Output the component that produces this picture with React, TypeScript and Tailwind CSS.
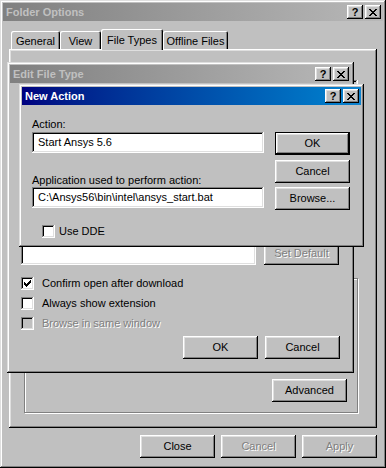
import React from 'react';

const raised = 'shadow-[inset_-1px_-1px_#000,inset_1px_1px_#fff,inset_-2px_-2px_#808080,inset_2px_2px_#dfdfdf]';
const frame = 'shadow-[inset_-1px_-1px_#000,inset_1px_1px_#dfdfdf,inset_-2px_-2px_#808080,inset_2px_2px_#fff]';
const sunken = 'shadow-[inset_-1px_-1px_#fff,inset_1px_1px_#808080,inset_-2px_-2px_#dfdfdf,inset_2px_2px_#000]';
const defBtn = 'shadow-[inset_0_0_0_1px_#000,inset_-2px_-2px_#000,inset_2px_2px_#fff,inset_-3px_-3px_#808080,inset_3px_3px_#dfdfdf]';
const tab = 'shadow-[inset_1px_1px_#fff,inset_-1px_0_#000,inset_-2px_0_#808080] rounded-t-[2px]';
const dim = 'text-[#808080] [text-shadow:1px_1px_0_#fff]';

function CloseGlyph() {
  const rows = ['11000011', '01100110', '00111100', '00011000', '00111100', '01100110', '11000011'];
  return (
    <svg width="8" height="7" viewBox="0 0 8 7" shapeRendering="crispEdges">
      {rows.flatMap((r, y) =>
        r.split('').map((c, x) => (c === '1' ? <rect key={`${x}-${y}`} x={x} y={y} width="1" height="1" fill="#000" /> : null))
      )}
    </svg>
  );
}

function TitleBar({ title, active }: { title: string; active?: boolean }) {
  return (
    <div
      className={`mx-[3px] mt-[3px] h-[18px] shrink-0 flex items-center justify-between pl-[3px] pr-[2px] ${
        active ? 'bg-linear-to-r from-[#000080] to-[#1084d0] text-white' : 'bg-linear-to-r from-[#808080] to-[#b8b8b8] text-[#c0c0c0]'
      }`}
    >
      <span className="text-[11px] font-bold leading-[13px]">{title}</span>
      <div className="flex gap-[2px]">
        <div className={`w-4 h-[14px] flex items-center justify-center bg-[#c0c0c0] ${raised} text-[11px] font-bold leading-none text-black`}>?</div>
        <div className={`w-4 h-[14px] flex items-center justify-center bg-[#c0c0c0] ${raised}`}>
          <CloseGlyph />
        </div>
      </div>
    </div>
  );
}

function Btn({ children, disabled, def, className = '' }: { children: React.ReactNode; disabled?: boolean; def?: boolean; className?: string }) {
  return (
    <div
      className={`h-[23px] w-[75px] shrink-0 flex items-center justify-center bg-[#c0c0c0] text-[11px] leading-[13px] ${def ? defBtn : raised} ${
        disabled ? dim : 'text-black'
      } ${className}`}
    >
      {children}
    </div>
  );
}

function Check({ checked, disabled }: { checked?: boolean; disabled?: boolean }) {
  return (
    <div className={`w-[13px] h-[13px] shrink-0 flex items-center justify-center ${sunken} ${disabled ? 'bg-[#c0c0c0]' : 'bg-white'}`}>
      {checked && (
        <svg width="7" height="7" viewBox="0 0 7 7" shapeRendering="crispEdges">
          <path d="M6 0h1v3h-1v1h-1v1h-1v1h-1v1h-1v-1h-1v-1h-1v-3h1v1h1v1h1v-1h1v-1h1z" fill="#000" />
        </svg>
      )}
    </div>
  );
}

function CheckRow({ label, checked, disabled }: { label: string; checked?: boolean; disabled?: boolean }) {
  return (
    <div className="flex items-center gap-[8px] h-[13px]">
      <Check checked={checked} disabled={disabled} />
      <span className={disabled ? dim : ''}>{label}</span>
    </div>
  );
}

export default function App() {
  return (
    <div
      className={`relative w-[386px] h-[468px] overflow-hidden bg-[#c0c0c0] text-black text-[11px] leading-[13px] [font-family:'Liberation_Sans',Arial,sans-serif] ${frame} flex flex-col`}
    >
      <TitleBar title="Folder Options" />

      <div className="mt-[8px] h-[20px] flex items-end pl-[11px]">
        <div className={`w-[49px] h-[18px] pt-[4px] text-center ${tab}`}>General</div>
        <div className={`w-[41px] h-[18px] pt-[4px] text-center ${tab}`}>View</div>
        <div className={`relative z-10 w-[62px] h-[21px] -mb-px pt-[5px] text-center bg-[#c0c0c0] ${tab}`}>File Types</div>
        <div className={`w-[65px] h-[18px] pt-[4px] text-center ${tab}`}>Offline Files</div>
      </div>

      <div className={`mx-[9px] h-[379px] shrink-0 ${raised} flex flex-col`}>
        <div className={`ml-[319px] mt-[31px] w-[30px] h-[40px] ${sunken}`} />
        <div className="ml-[15px] mt-[158px] w-[334px] h-[135px] border border-[#808080] shadow-[1px_1px_0_#fff,inset_1px_1px_0_#fff] flex items-end justify-end pr-[10px] pb-[10px]">
          <Btn>Advanced</Btn>
        </div>
      </div>

      <div className="mt-[7px] flex justify-end gap-[6px] pr-[9px]">
        <Btn>Close</Btn>
        <Btn disabled>Cancel</Btn>
        <Btn disabled>Apply</Btn>
      </div>

      <div className={`absolute left-[7px] top-[62px] w-[347px] h-[311px] bg-[#c0c0c0] ${frame} flex flex-col`}>
        <TitleBar title="Edit File Type" />
        <div className="ml-[14px] mt-[159px] flex items-start gap-[8px]">
          <div className={`mt-px w-[235px] h-[22px] bg-white ${sunken}`} />
          <Btn disabled>Set Default</Btn>
        </div>
        <div className="ml-[14px] mt-[12px] flex flex-col gap-[7px]">
          <CheckRow label="Confirm open after download" checked />
          <CheckRow label="Always show extension" />
          <CheckRow label="Browse in same window" disabled />
        </div>
        <div className="mt-[6px] flex justify-end gap-[7px] pr-[14px]">
          <Btn>OK</Btn>
          <Btn>Cancel</Btn>
        </div>
      </div>

      <div className={`absolute left-[19px] top-[84px] w-[345px] h-[163px] bg-[#c0c0c0] ${frame} flex flex-col`}>
        <TitleBar title="New Action" active />
        <div className="flex gap-[11px] pl-[13px] pt-[13px]">
          <div className="w-[232px] flex flex-col">
            <span>Action:</span>
            <div className={`mt-px h-[21px] bg-white ${sunken} flex items-center pl-[6px]`}>Start Ansys 5.6</div>
            <span className="mt-[21px]">Application used to perform action:</span>
            <div className={`h-[21px] bg-white ${sunken} flex items-center pl-[6px]`}>{'C:\\Ansys56\\bin\\intel\\ansys_start.bat'}</div>
            <div className="mt-[17px] ml-[10px] flex items-center gap-[4px]">
              <Check />
              <span>Use DDE</span>
            </div>
          </div>
          <div className="flex flex-col pt-[14px]">
            <Btn def>OK</Btn>
            <Btn className="mt-[5px]">Cancel</Btn>
            <Btn className="mt-[4px]">Browse...</Btn>
          </div>
        </div>
      </div>
    </div>
  );
}
